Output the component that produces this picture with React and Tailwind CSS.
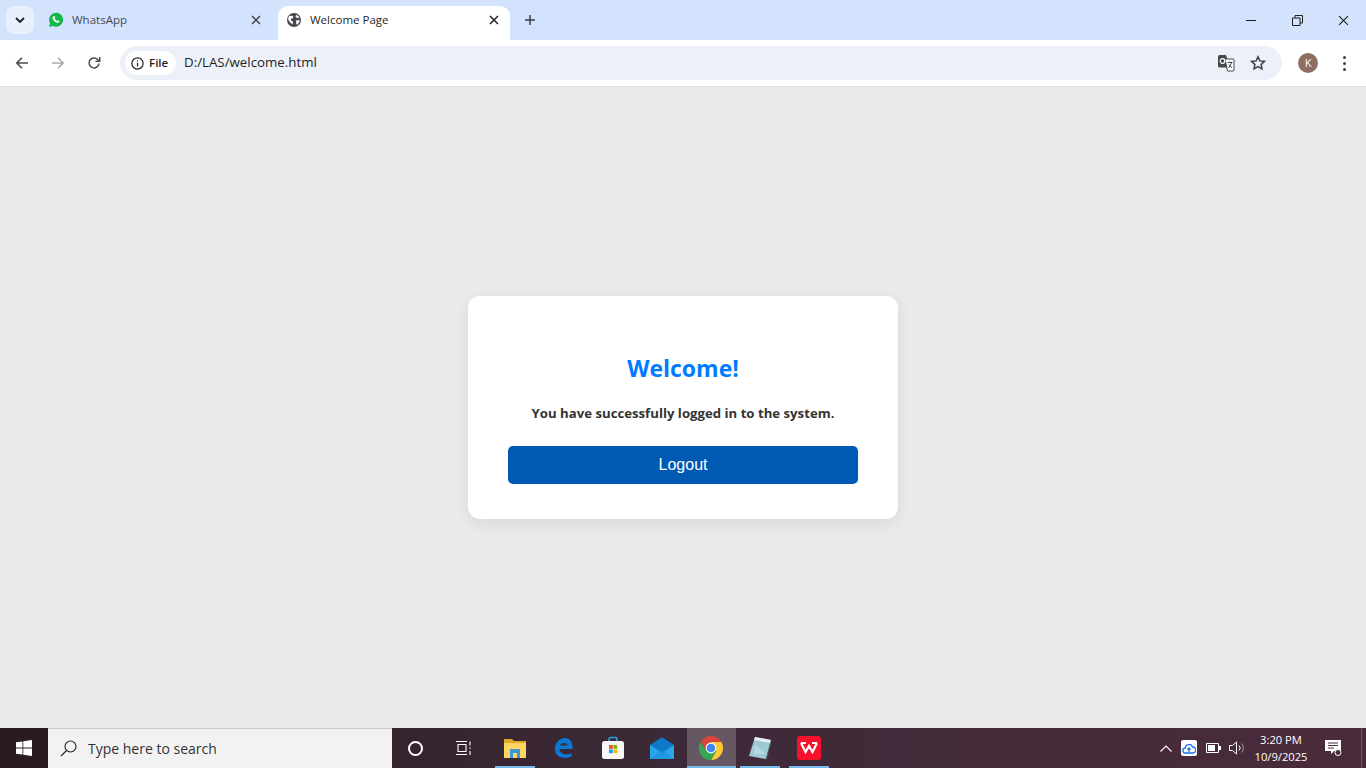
import React from 'react';

const ui = { fontFamily: '"Open Sans", "Noto Sans", sans-serif' };

const WhatsAppIcon = () => (
  <svg width="16" height="16" viewBox="0 0 16 16">
    <path d="M1 15l1-3.800A7 7 0 1 1 4.900 14z" fill="#12b94a" />
    <path d="M5.400 4.300c.5-.5 1-.4 1.200 0l.5 1.200c.1.300-.4.800-.5 1.100.5 1 1.200 1.700 2.400 2.300.3-.2.800-.8 1.100-.6l1.200.6c.3.200.2.800-.1 1.200-.6.700-1.700.8-2.900.3C6.500 9.600 5.200 8.200 4.700 6.800c-.3-1 .1-2 .7-2.500z" fill="#fff" />
  </svg>
);

const GlobeIcon = () => (
  <svg width="16" height="16" viewBox="0 0 16 16">
    <circle cx="8" cy="8" r="7" fill="#45484d" />
    <path d="M3 4l3.200-.2 1.300 1.200-1 1.500-1.800.3.700 2.200 1.600.6-.4 3L3.800 10 2 7.200zM10 3l2.500 1 .8 1.700-2.300.2-1.500-1.200zM10 8.500l3.600-.4-.2 2-2.100 2.600-1-.8z" fill="#fff" />
  </svg>
);

const CloseIcon = ({ size = 10, stroke = '#45474a', width = 1.5 }) => (
  <svg width={size} height={size} viewBox="0 0 10 10" fill="none" stroke={stroke} strokeWidth={width}>
    <path d="M1 1l8 8M9 1l-8 8" />
  </svg>
);

const NavArrow = ({ flip, color }) => (
  <svg width="14" height="14" viewBox="0 0 14 14" fill="none" stroke={color} strokeWidth="1.600" className={flip ? 'rotate-180' : ''}>
    <path d="M13 7H2M7 1.700L1.800 7 7 12.300" />
  </svg>
);

const Tabs = () => (
  <div className="h-10 bg-[#d3e3fd] flex items-start shrink-0">
    <div className="ml-[6px] mt-[6px] w-7 h-7 rounded-lg bg-[#e9f0fd] flex items-center justify-center">
      <svg width="10" height="6" viewBox="0 0 10 6" fill="none" stroke="#1f1f1f" strokeWidth="1.800"><path d="M1 1l4 4 4-4" /></svg>
    </div>
    <div className="w-[244px] h-[28px] mt-[6px] pl-[14px] pr-[17px] flex items-center">
      <WhatsAppIcon />
      <span className="ml-[8px] text-[11.5px] text-[#474a4f] flex-1">WhatsApp</span>
      <CloseIcon />
    </div>
    <div className="w-[232px] h-[34px] mt-[6px] bg-white rounded-t-[10px] pb-[6px] pl-[8px] pr-[11px] flex items-center">
      <GlobeIcon />
      <span className="ml-2 text-[11.5px] text-[#1f1f1f] flex-1">Welcome Page</span>
      <CloseIcon stroke="#1f1f1f" />
    </div>
    <div className="ml-[14px] mt-[14px] w-3 h-3">
      <svg width="12" height="12" viewBox="0 0 12 12" fill="none" stroke="#3c4043" strokeWidth="1.500"><path d="M6 1v10M1 6h10" /></svg>
    </div>
    <div className="ml-auto flex h-[40px]">
      <div className="w-[46px] flex items-center justify-center">
        <div className="w-[10px] h-px bg-[#1f1f1f]" />
      </div>
      <div className="w-[46px] flex items-center justify-center">
        <svg width="11" height="11" viewBox="0 0 11 11" fill="none" stroke="#1f1f1f"><path d="M.5 3h7.500v7.500H.5zM3 3V.5h7.500V8H8" /></svg>
      </div>
      <div className="w-[46px] flex items-center justify-center">
        <CloseIcon size={11} stroke="#1f1f1f" width={1} />
      </div>
    </div>
  </div>
);

const Toolbar = () => (
  <div className="h-[47px] bg-white border-b border-[#dfe1e5] flex items-center shrink-0">
    <div className="w-[15px]" />
    <NavArrow color="#474a4f" />
    <div className="w-[22px]" />
    <NavArrow flip color="#a9abaf" />
    <div className="w-[22px]" />
    <svg width="14" height="14" viewBox="0 0 14 14" fill="none" stroke="#474a4f" strokeWidth="1.500">
      <path d="M12 7.500A5 5 0 1 1 10.500 3.300L12.500 5" />
      <path d="M12.700 1v4.300H8.500" />
    </svg>
    <div className="ml-[19px] w-[1162px] h-[34px] rounded-full bg-[#ecf1f9] flex items-center pl-[5px] pr-[16px]">
      <div className="h-6 w-[51px] rounded-full bg-white flex items-center pl-[6px]">
        <svg width="13" height="13" viewBox="0 0 13 13" fill="none" stroke="#1f1f1f" strokeWidth="1.200">
          <circle cx="6.500" cy="6.500" r="5.600" />
          <path d="M6.500 5.700v3.800M6.500 3.300v1.200" />
        </svg>
        <span className="ml-[5px] text-[11.5px] font-semibold text-[#1f1f1f]">File</span>
      </div>
      <span className="ml-2 text-[13.3px] text-[#1f1f1f] flex-1">D:/LAS/welcome.html</span>
      <svg width="18" height="18" viewBox="0 0 18 18" className="mr-[15px]">
        <path d="M1 2.500A1.500 1.500 0 0 1 2.500 1H9l4 12.500H2.500A1.500 1.500 0 0 1 1 12z" fill="#45484d" />
        <path d="M8 5h8a1 1 0 0 1 1 1v10a1 1 0 0 1-1 1h-5.500z" fill="#fff" stroke="#45484d" />
        <circle cx="5.500" cy="7" r="2.300" fill="none" stroke="#fff" strokeWidth="1.200" />
        <path d="M10.500 8.500h5M13 7.500v1M11.500 14l3-5M12 10.500l3 3.500" stroke="#45484d" fill="none" />
      </svg>
      <svg width="16" height="16" viewBox="0 0 16 16" fill="none" stroke="#3c4043" strokeWidth="1.500">
        <path d="M8 1.800l1.900 4.100 4.500.5-3.300 3 .9 4.400L8 11.600l-4 2.200.9-4.400-3.300-3 4.500-.5z" />
      </svg>
    </div>
    <div className="ml-4 w-5 h-5 rounded-full bg-[#8d6e63] flex items-center justify-center text-[11px] text-white">K</div>
    <div className="ml-[25px] flex flex-col gap-[3px]">
      <div className="w-[3px] h-[3px] rounded-full bg-[#3c4043]" />
      <div className="w-[3px] h-[3px] rounded-full bg-[#3c4043]" />
      <div className="w-[3px] h-[3px] rounded-full bg-[#3c4043]" />
    </div>
  </div>
);

const AppSlot = ({ active, running, children }) => (
  <div className={`relative w-[49px] h-10 pr-px flex items-center justify-center ${active ? 'bg-[#655863]' : ''}`}>
    {children}
    {running && <div className={`absolute bottom-0 h-[2px] bg-[#76b9ed] ${active ? 'left-0 right-0' : 'left-1 right-[5px]'}`} />}
  </div>
);

const Taskbar = () => (
  <div className="h-10 shrink-0 flex items-center text-white bg-gradient-to-r from-[#2a1a1f] via-[#3d2a38] to-[#4a2b3b]">
    <div className="w-12 flex items-center justify-center">
      <svg width="16" height="16" viewBox="0 0 16 16" fill="#fff"><path d="M0 2.300l6.500-.9v6.200H0zM7.300 1.300L16 0v7.600H7.300zM0 8.400h6.500v6.200L0 13.700zM7.300 8.400H16V16l-8.700-1.300z" /></svg>
    </div>
    <div className="w-[344px] h-10 bg-[#f2f2f2] border-t border-[#c9c9c9] flex items-center pl-[12px]">
      <svg width="17" height="17" viewBox="0 0 17 17" fill="none" stroke="#222" strokeWidth="1.100"><circle cx="10.500" cy="6.500" r="5.500" /><path d="M6.500 10.500L1 16" /></svg>
      <span className="ml-[11px] text-[14px] text-[#333]">Type here to search</span>
    </div>
    <div className="w-12 flex items-center justify-center">
      <div className="w-[15px] h-[15px] rounded-full border-2 border-white -ml-[2px]" />
    </div>
    <div className="w-[51px] flex items-center justify-center">
      <svg width="16" height="15" viewBox="0 0 16 15" fill="none" stroke="#fff" strokeWidth="1.100" className="-ml-[3px]">
        <path d="M0 .5h11M2 3.500h8v7H2zM0 13.500h11M14 .5v4M14 6.500v1.500M14 10v4" />
      </svg>
    </div>
    <AppSlot running>
      <svg width="22" height="20" viewBox="0 0 22 20">
        <path d="M0 1h8l2 2h12v17H0z" fill="#e2a82b" />
        <path d="M0 5h22v15H0z" fill="#fcd462" />
        <path d="M6 11h10v9h-3v-5H9v5H6z" fill="#3d96d6" />
      </svg>
    </AppSlot>
    <AppSlot>
      <svg width="20" height="22" viewBox="0 0 20 22" fill="none">
        <path d="M18.500 12H5.500c0 5 6.500 7 12 4v3.500C10 23 1 20 1 12 1 5 6 1 11 1c5 0 8 4 7.500 11z" fill="#0a78d4" />
        <path d="M6 8.500h7.500C13.500 5.500 7.500 5 6 8.500z" fill="#3d2a38" />
      </svg>
    </AppSlot>
    <AppSlot>
      <svg width="24" height="24" viewBox="0 0 24 24">
        <path d="M8 6V3a1.500 1.500 0 0 1 1.500-1.500h5A1.500 1.500 0 0 1 16 3v3" fill="none" stroke="#29a8e0" strokeWidth="1.500" />
        <rect x="1" y="5" width="22" height="18" rx="2.500" fill="#f7f7f7" />
        <rect x="8" y="9" width="3.800" height="3.800" fill="#f25022" />
        <rect x="12.400" y="9" width="3.800" height="3.800" fill="#7fba00" />
        <rect x="8" y="13.400" width="3.800" height="3.800" fill="#00a4ef" />
        <rect x="12.400" y="13.400" width="3.800" height="3.800" fill="#ffb900" />
      </svg>
    </AppSlot>
    <AppSlot>
      <svg width="24" height="22" viewBox="0 0 24 22">
        <path d="M0 8L12 0l12 8v14H0z" fill="#0f78c8" />
        <path d="M0 8l12 8 12-8v14H0z" fill="#2ba6e8" />
        <path d="M0 22l12-9 12 9z" fill="#1a8ed8" opacity=".6" />
      </svg>
    </AppSlot>
    <AppSlot active running>
      <svg width="24" height="24" viewBox="0 0 24 24">
        <path d="M12 12L22.400 6A12 12 0 0 0 1.600 6l5.200 9z" fill="#db4437" />
        <path d="M12 24a12 12 0 0 0 10.400-18H12l5.200 9z" fill="#fcc934" />
        <path d="M1.600 6A12 12 0 0 0 12 24l5.200-9H6.800z" fill="#34a853" />
        <circle cx="12" cy="12" r="5.400" fill="#fff" />
        <circle cx="12" cy="12" r="4.300" fill="#4285f4" />
      </svg>
    </AppSlot>
    <AppSlot running>
      <svg width="22" height="24" viewBox="0 0 22 24">
        <path d="M6 1l16 3-5 19L0 20z" fill="#9cc9d4" />
        <path d="M6 1l16 3-1 3-16-3z" fill="#e6eef0" />
        <path d="M6 9l11 9-12 0z" fill="#c8e2e8" opacity=".6" />
        <path d="M17 23l5-19 .5 2-5 18z" fill="#57605c" />
      </svg>
    </AppSlot>
    <AppSlot running>
      <div className="w-6 h-6 rounded-[3px] bg-[#f8112b] flex items-center justify-center">
        <svg width="18" height="12" viewBox="0 0 18 12" fill="none" stroke="#fff" strokeWidth="2.200"><path d="M1 1l4.500 9L9 4l3.500 6L17 1M1 1h5M12 1h5" /></svg>
      </div>
    </AppSlot>
    <div className="ml-auto flex items-center h-10">
      <svg width="12" height="7" viewBox="0 0 12 7" fill="none" stroke="#fff" strokeWidth="1.100"><path d="M.5 6.500L6 1l5.500 5.500" /></svg>
      <div className="ml-[9px] w-4 h-4 rounded-[2px] bg-white flex items-center justify-center">
        <svg width="14" height="11" viewBox="0 0 14 11" fill="none" stroke="#1a73e8" strokeWidth="1.300"><path d="M3.500 10a2.500 2.500 0 0 1-.2-5A3.700 3.700 0 0 1 10.500 4 3 3 0 0 1 11 10z" /><path d="M7 9V5M5.500 6.500L7 5l1.500 1.500" /></svg>
      </div>
      <svg width="15" height="10" viewBox="0 0 15 10" className="ml-[9px]" fill="none" stroke="#fff"><path d="M.5.500h12v9H.5z" /><path d="M13 3h2v4h-2z" fill="#fff" stroke="none" /><rect x="2" y="2" width="7" height="6" fill="#fff" stroke="none" /></svg>
      <svg width="16" height="14" viewBox="0 0 16 14" className="ml-[8px]" fill="none" stroke="#fff"><path d="M.5 4.500h3L7.500 1v12l-4-3.500h-3zM10 4.500a3.500 3.500 0 0 1 0 5" /><path d="M12.500 2.500a6.500 6.500 0 0 1 0 9" opacity=".5" /></svg>
      <div className="ml-[6px] w-[60px] flex flex-col items-center text-[11.2px] leading-[17px]">
        <span>3:20 PM</span>
        <span>10/9/2025</span>
      </div>
      <svg width="17" height="16" viewBox="0 0 17 16" className="ml-[14px]" fill="#fff"><path d="M0 0h16v11H9l-3 3v-3H0z" /><path d="M3 3h10M3 5.500h10M3 8h6" stroke="#4a2b3b" /><circle cx="13" cy="12.500" r="3" fill="#4a2b3b" stroke="#fff" /></svg>
      <div className="ml-[19px] w-px h-10 bg-[#6d5866]" />
      <div className="w-[4px]" />
    </div>
  </div>
);

export default function App() {
  return (
    <div className="h-screen w-full flex flex-col overflow-hidden bg-[#e9eaeb]" style={ui}>
      <Tabs />
      <Toolbar />
      <main className="flex-1 flex items-center justify-center">
        <div className="w-[430px] h-[223px] bg-white rounded-xl shadow-[0_4px_15px_rgba(0,0,0,0.08)] px-10 pt-[56px] text-center">
          <h1 className="text-[23px] leading-[33px] font-bold text-[#007bff]">Welcome!</h1>
          <p className="mt-[19px] text-[13.2px] leading-[19px] font-bold text-[#333]">You have successfully logged in to the system.</p>
          <button className="mt-[23px] w-full h-[38px] rounded-[5px] bg-[#0059b3] text-white text-base font-['Liberation_Sans',sans-serif]">Logout</button>
        </div>
      </main>
      <Taskbar />
    </div>
  );
}
